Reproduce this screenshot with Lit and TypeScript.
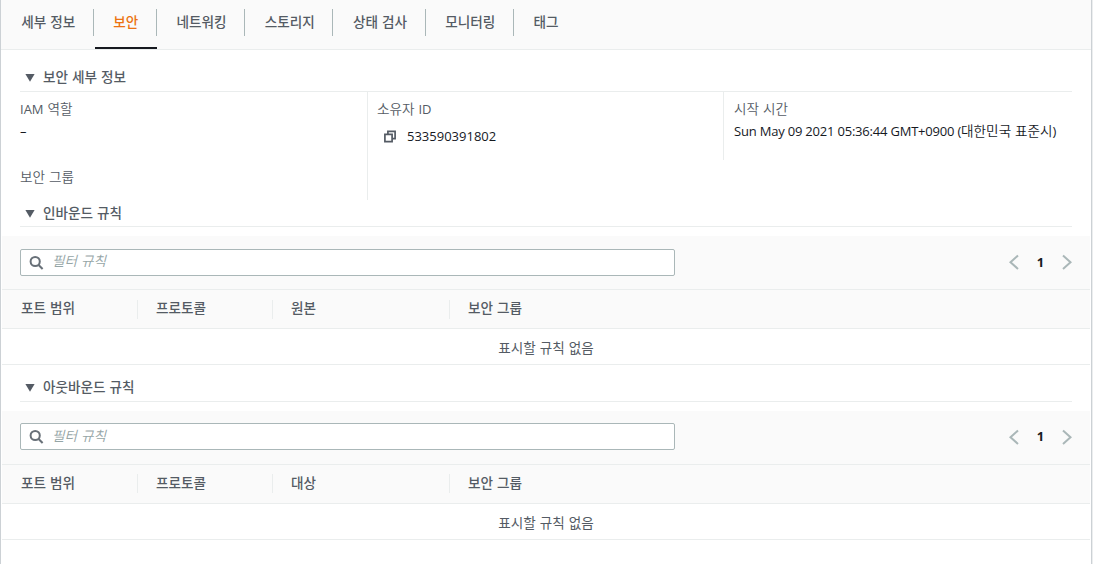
import { LitElement, css, html, svg } from 'lit'
import { customElement, property } from 'lit/decorators.js'
import { classMap } from 'lit/directives/class-map.js'

const tabs = [
  '세부 정보',
  '보안',
  '네트워킹',
  '스토리지',
  '상태 검사',
  '모니터링',
  '태그',
]

const icon = (cls: string, size: number, content: unknown) => html`
  <svg class=${cls} width=${size} height=${size} viewBox="0 0 ${size} ${size}">
    ${content}
  </svg>
`

@customElement('section-title')
class SectionTitle extends LitElement {
  static styles = css`
    :host {
      display: flex;
      align-items: center;
      box-sizing: border-box;
      height: 27px;
      margin: 0 19px;
      padding: 0 0 3.6px 5px;
      gap: 8px;
      border-bottom: 1px solid #eaeded;
      font-weight: 500;
      color: #545b64;
    }
    svg {
      display: block;
      margin-top: 2px;
      fill: #545b64;
    }
  `
  render() {
    return html`
      ${icon('caret', 10, svg`<path d="M.4 2h9.2L5 9.8z" />`)}
      <slot></slot>
    `
  }
}

@customElement('rules-table')
class RulesTable extends LitElement {
  static styles = css`
    :host {
      display: block;
      margin: 9px 1px 0;
      color: #545b64;
    }
    .toolbar {
      display: flex;
      justify-content: space-between;
      align-items: flex-start;
      box-sizing: border-box;
      height: 54px;
      padding: 12.2px 15px 0 18px;
      background: #fafafa;
      border-bottom: 1px solid #eaeded;
    }
    .filter {
      display: flex;
      align-items: center;
      box-sizing: border-box;
      width: 655px;
      height: 27px;
      padding-left: 8px;
      gap: 8px;
      background: #fff;
      border: 1px solid #aab7b8;
      border-radius: 2px;
    }
    .placeholder {
      padding-bottom: 4px;
      font-style: italic;
      font-weight: 350;
      color: #95a5a6;
    }
    .search {
      fill: none;
      stroke: #687078;
      stroke-width: 2;
    }
    .pages {
      display: flex;
      align-items: center;
      height: 27px;
      gap: 14.5px;
    }
    .arrow {
      fill: none;
      stroke: #aab7b8;
      stroke-width: 2;
    }
    .page {
      width: 8px;
      padding-bottom: 1px;
      text-align: center;
      font: 700 13px 'Open Sans', sans-serif;
      color: #16191f;
    }
    .head {
      display: flex;
      align-items: center;
      box-sizing: border-box;
      height: 39px;
      background: #fafafa;
      border-bottom: 1px solid #eaeded;
      font-weight: 500;
    }
    .cell {
      box-sizing: border-box;
      width: 135px;
      height: 19px;
      padding: 0.5px 0 0 18px;
      line-height: 15px;
      border-right: 1px solid #eaeded;
    }
    .cell:first-child {
      width: 136px;
      padding-left: 19px;
    }
    .cell:nth-child(3) {
      width: 177px;
    }
    .cell:last-child {
      flex: 1;
      border-right: none;
    }
    .empty {
      box-sizing: border-box;
      height: 36px;
      line-height: 36px;
      text-align: center;
      border-bottom: 1px solid #eaeded;
    }
  `
  @property({ attribute: false }) columns: string[] = []

  render() {
    return html`
      <div class="toolbar">
        <div class="filter">
          ${icon(
            'search',
            15,
            svg`<circle cx="6.2" cy="6.5" r="4.6" /><path d="M9.6 10l4 4" />`
          )}
          <span class="placeholder">필터 규칙</span>
        </div>
        <div class="pages">
          ${icon('arrow', 16, svg`<path d="M12 1.5L4.5 8.2l7.5 6.7" />`)}
          <span class="page">1</span>
          ${icon('arrow', 16, svg`<path d="M4 1.5l7.5 6.7L4 14.9" />`)}
        </div>
      </div>
      <div class="head">
        ${this.columns.map((name) => html`<div class="cell">${name}</div>`)}
      </div>
      <div class="empty">표시할 규칙 없음</div>
    `
  }
}

@customElement('app-root')
class AppRoot extends LitElement {
  static styles = css`
    :host {
      display: block;
      box-sizing: border-box;
      width: 1092px;
      height: 564px;
      overflow: hidden;
      background: #fff;
      border-left: 1px solid #ccd1d5;
      border-right: 1px solid #ccd1d5;
      box-shadow: 1px 0 #eceeef;
      font: 13.6px/20px 'Noto Sans CJK KR', sans-serif;
      word-spacing: 0.9px;
      color: #16191f;
    }
    .tabs {
      display: flex;
      box-sizing: border-box;
      height: 50px;
      background: #fafafa;
      border-bottom: 1px solid #eaeded;
    }
    .tab {
      display: flex;
      flex-direction: column;
      justify-content: space-between;
      font-weight: 500;
      color: #545b64;
    }
    .label {
      box-sizing: border-box;
      height: 27px;
      margin-top: 9px;
      padding: 2px 17.6px 0 19.6px;
      border-right: 1px solid #aab7b8;
    }
    .tab:first-child .label {
      padding-left: 20.2px;
    }
    .tab:last-child .label {
      border-right: none;
    }
    .selected {
      color: #ec7211;
    }
    .selected::after {
      content: '';
      height: 2px;
      margin-left: 1px;
      background: #16191f;
    }
    .security {
      margin-top: 15px;
    }
    .details {
      display: flex;
      align-items: flex-start;
      height: 108.4px;
      margin-left: 19px;
    }
    .column {
      box-sizing: border-box;
      width: 356px;
      height: 108px;
      padding: 6px 0 0 9px;
      border-left: 1px solid #eaeded;
    }
    .column:first-child {
      width: 347px;
      padding-left: 0;
      border-left: none;
    }
    .column:last-child {
      height: 68px;
      padding-left: 10px;
    }
    .name {
      color: #545b64;
      font-weight: 350;
    }
    .value {
      height: 20px;
      margin-top: 2px;
      white-space: nowrap;
      font-weight: 350;
    }
    .latin {
      font-family: 'Open Sans', sans-serif;
      font-size: 13px;
      font-weight: 400;
      word-spacing: 0;
    }
    .date {
      letter-spacing: -0.2px;
    }
    .owner {
      display: flex;
      align-items: center;
      margin-top: 7px;
      padding-left: 6px;
      gap: 10px;
    }
    .copy {
      fill: none;
      stroke: #545b64;
      stroke-width: 1.7;
    }
    .groups {
      margin-top: 25px;
    }
    .outbound {
      margin-top: 9.5px;
    }
  `
  render() {
    return html`
      <nav class="tabs">
        ${tabs.map(
          (name) => html`
            <div class=${classMap({ tab: true, selected: name === '보안' })}>
              <div class="label">${name}</div>
            </div>
          `
        )}
      </nav>
      <section-title class="security">보안 세부 정보</section-title>
      <div class="details">
        <div class="column">
          <div class="name"><span class="latin">IAM</span> 역할</div>
          <div class="value latin">–</div>
          <div class="name groups">보안 그룹</div>
        </div>
        <div class="column">
          <div class="name">소유자 <span class="latin">ID</span></div>
          <div class="value owner">
            ${icon(
              'copy',
              14,
              svg`<path d="M1.9 5.4h7.2v7.2H1.9zM4.9 5.4v-3h7.2v7.2h-3" />`
            )}
            <span class="latin">533590391802</span>
          </div>
        </div>
        <div class="column">
          <div class="name">시작 시간</div>
          <div class="value">
            <span class="latin date">Sun May 09 2021 05:36:44 GMT+0900 (</span
            >대한민국 표준시<span class="latin">)</span>
          </div>
        </div>
      </div>
      <section-title>인바운드 규칙</section-title>
      <rules-table
        .columns=${['포트 범위', '프로토콜', '원본', '보안 그룹']}
      ></rules-table>
      <section-title class="outbound">아웃바운드 규칙</section-title>
      <rules-table
        .columns=${['포트 범위', '프로토콜', '대상', '보안 그룹']}
      ></rules-table>
    `
  }
}
